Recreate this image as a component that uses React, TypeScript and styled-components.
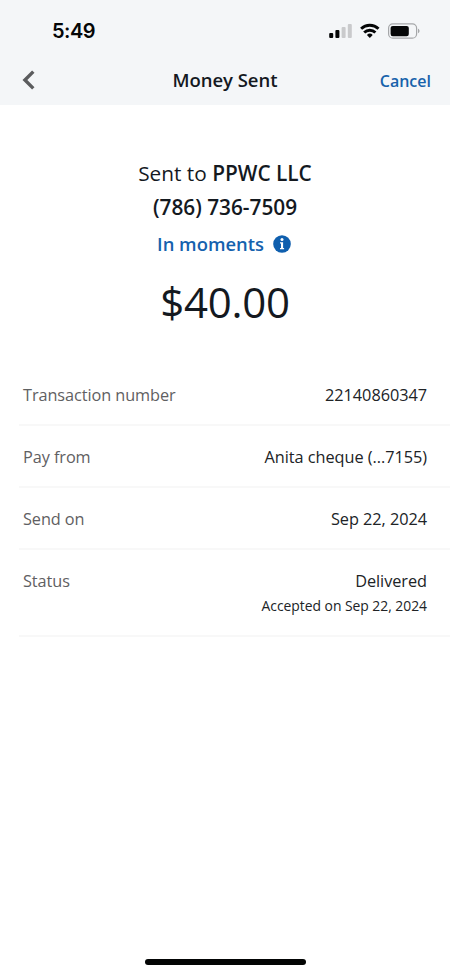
import React from 'react';
import styled, { createGlobalStyle } from 'styled-components';

const Global = createGlobalStyle`
  * { box-sizing: border-box; }
  body { margin: 0; background: #fff; }
`;

const Screen = styled.main`
  width: 450px;
  height: 975px;
  display: flex;
  flex-direction: column;
  background: #fff;
  color: #14191f;
  font-family: 'Open Sans', 'Noto Sans', sans-serif;
  overflow: hidden;
`;

const Header = styled.header`
  height: 105px;
  flex: none;
  background: #f4f6f8;
`;

const StatusBar = styled.div`
  height: 60px;
  display: flex;
  align-items: center;
  justify-content: space-between;
  padding: 1px 30px 0 52px;
`;

const Clock = styled.time`
  font: 600 20px/24px Inter, sans-serif;
  letter-spacing: -0.5px;
  color: #050607;
`;

const StatusIcons = styled.svg`
  display: block;
`;

const NavBar = styled.nav`
  height: 40px;
  display: grid;
  grid-template-columns: 100px 1fr 100px;
  align-items: center;
`;

const BackButton = styled.button`
  border: 0;
  background: none;
  padding: 0 0 0 22px;
  display: flex;
`;

const Title = styled.h1`
  margin: 0;
  text-align: center;
  font-size: 18.5px;
  letter-spacing: -0.05px;
  line-height: 26px;
  font-weight: 600;
`;

const CancelButton = styled.button`
  border: 0;
  background: none;
  padding: 2px 19px 0 0;
  text-align: right;
  font: 600 16px/22px 'Open Sans', sans-serif;
  color: #1762ab;
`;

const Summary = styled.section`
  height: 259px;
  flex: none;
  padding-top: 52px;
  display: flex;
  flex-direction: column;
  align-items: center;
`;

const Recipient = styled.div`
  font-size: 20.8px;
  line-height: 33.5px;
  text-align: center;
  white-space: nowrap;
`;

const Strong = styled.strong`
  font-weight: 600;
`;

const Timing = styled.div`
  display: flex;
  align-items: center;
  gap: 9px;
  height: 26px;
  margin: 7px 2px 0 0;
  font-size: 18.4px;
  font-weight: 600;
  color: #1562ae;
`;

const TimingText = styled.span`
  line-height: 24px;
`;

const Amount = styled.div`
  margin-top: 17px;
  font-size: 42px;
  line-height: 56px;
  letter-spacing: -0.3px;
`;

const Details = styled.dl`
  margin: 0 0 0 19px;
`;

const Row = styled.div<{ $tall?: boolean }>`
  height: ${(p) => (p.$tall ? 87 : 62)}px;
  display: flex;
  justify-content: space-between;
  padding: 19px 23px 0 4px;
  border-bottom: 2px solid #f8f8f8;
`;

const Label = styled.dt`
  font-size: 16.3px;
  letter-spacing: -0.08px;
  line-height: 24px;
  color: #5f6062;
`;

const Value = styled.dd`
  margin: 0;
  text-align: right;
  font-size: 16.3px;
  letter-spacing: -0.04px;
  line-height: 24px;
  color: #202326;
`;

const Note = styled.div`
  font-size: 13.9px;
  letter-spacing: -0.03px;
  line-height: 26px;
`;

const HomeIndicator = styled.div`
  width: 161px;
  height: 6px;
  border-radius: 3px;
  background: #030504;
  margin: auto auto 10px;
`;

const rows = [
  { label: 'Transaction number', value: '22140860347' },
  { label: 'Pay from', value: 'Anita cheque (...7155)' },
  { label: 'Send on', value: 'Sep 22, 2024' },
  { label: 'Status', value: 'Delivered', note: 'Accepted on Sep 22, 2024' },
];

export default function App() {
  return (
    <Screen>
      <Global />
      <Header>
        <StatusBar>
          <Clock>5:49</Clock>
          <StatusIcons width="92" height="18" viewBox="328 21 92 18" aria-hidden="true">
            <rect x="329.2" y="32" width="4" height="5" rx="1" fill="#050607" />
            <rect x="335.4" y="29" width="4" height="8" rx="1" fill="#050607" />
            <rect x="341.6" y="26" width="4" height="11" rx="1" fill="#c9cacc" />
            <rect x="347.8" y="23" width="4" height="14" rx="1" fill="#c9cacc" />
            <g fill="none" stroke="#050607" strokeWidth="2.9">
              <path d="M361.1 27.8a12.6 12.6 0 0 1 17.4 0" />
              <path d="M364.2 31.5a8 8 0 0 1 11.2 0" />
            </g>
            <path d="M366.9 34a4.2 4.2 0 0 1 5.8 0l-2.9 3z" fill="#050607" />
            <rect x="388.6" y="22.9" width="28" height="14.2" rx="4.2" fill="none" stroke="#a5a7a9" strokeWidth="1.2" />
            <rect x="390.6" y="24.9" width="18.2" height="10.4" rx="2.2" fill="#050607" />
            <path d="M418 27.8c2 .7 2 3.7 0 4.4z" fill="#a5a7a9" />
          </StatusIcons>
        </StatusBar>
        <NavBar>
          <BackButton aria-label="Back">
            <svg width="14" height="20" viewBox="0 0 14 20">
              <path d="M11.3 1.6 2.9 10l8.4 8.4" fill="none" stroke="#5b5c5e" strokeWidth="3.4" />
            </svg>
          </BackButton>
          <Title>Money Sent</Title>
          <CancelButton>Cancel</CancelButton>
        </NavBar>
      </Header>
      <Summary>
        <Recipient>Sent to <Strong>PPWC LLC</Strong></Recipient>
        <Recipient><Strong>(786) 736-7509</Strong></Recipient>
        <Timing>
          <TimingText>In moments</TimingText>
          <svg width="18" height="18" viewBox="0 0 18 18" aria-hidden="true">
            <circle cx="9" cy="9" r="8.8" fill="#0f5fae" />
            <circle cx="9" cy="4.5" r="1.5" fill="#fff" />
            <path d="M7 7.2h3.1v5.8h1v1.2H7V13h1V8.4H7z" fill="#fff" />
          </svg>
        </Timing>
        <Amount>$40.00</Amount>
      </Summary>
      <Details>
        {rows.map((r) => (
          <Row key={r.label} $tall={!!r.note}>
            <Label>{r.label}</Label>
            <Value>
              {r.value}
              {r.note && <Note>{r.note}</Note>}
            </Value>
          </Row>
        ))}
      </Details>
      <HomeIndicator />
    </Screen>
  );
}
